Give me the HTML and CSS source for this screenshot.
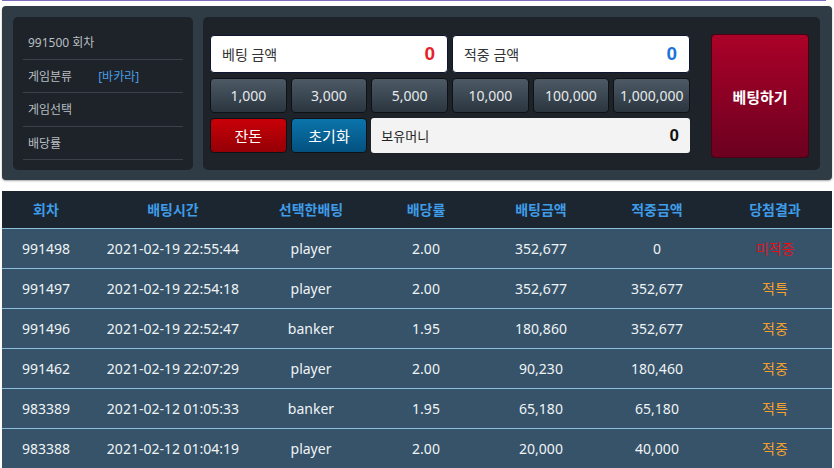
FILE: index.html
```html
<!doctype html>
<html>
<head>
<meta charset="utf-8">
<title>배팅</title>
<link rel="stylesheet" href="styles.css">
</head>
<body>
<div class="topline"></div>

<div class="panel">
	<ul class="info">
		<li>991500 회차</li>
		<li>게임분류 <span class="kind">[바카라]</span></li>
		<li>게임선택</li>
		<li>배당률</li>
	</ul>
	<div class="betbox">
		<div class="pad">
			<div class="field"><span>베팅 금액</span><b class="red">0</b></div>
			<div class="field"><span>적중 금액</span><b class="blue">0</b></div>
			<a class="chip">1,000</a>
			<a class="chip">3,000</a>
			<a class="chip">5,000</a>
			<a class="chip">10,000</a>
			<a class="chip">100,000</a>
			<a class="chip">1,000,000</a>
			<a class="chip change">잔돈</a>
			<a class="chip reset">초기화</a>
			<div class="money"><span>보유머니</span><b>0</b></div>
		</div>
		<a class="betbtn">베팅하기</a>
	</div>
</div>

<table class="list">
	<thead>
		<tr><th class="c1">회차</th><th class="c2">배팅시간</th><th class="c3">선택한배팅</th><th class="c4">배당률</th><th class="c5">배팅금액</th><th class="c6">적중금액</th><th class="c7">당첨결과</th></tr>
	</thead>
	<tbody>
		<tr><td>991498</td><td>2021-02-19 22:55:44</td><td>player</td><td>2.00</td><td>352,677</td><td>0</td><td class="lose">미적중</td></tr>
		<tr><td>991497</td><td>2021-02-19 22:54:18</td><td>player</td><td>2.00</td><td>352,677</td><td>352,677</td><td class="win">적특</td></tr>
		<tr><td>991496</td><td>2021-02-19 22:52:47</td><td>banker</td><td>1.95</td><td>180,860</td><td>352,677</td><td class="win">적중</td></tr>
		<tr><td>991462</td><td>2021-02-19 22:07:29</td><td>player</td><td>2.00</td><td>90,230</td><td>180,460</td><td class="win">적중</td></tr>
		<tr><td>983389</td><td>2021-02-12 01:05:33</td><td>banker</td><td>1.95</td><td>65,180</td><td>65,180</td><td class="win">적특</td></tr>
		<tr><td>983388</td><td>2021-02-12 01:04:19</td><td>player</td><td>2.00</td><td>20,000</td><td>40,000</td><td class="win">적중</td></tr>
	</tbody>
</table>
</body>
</html>
```
FILE: styles.css
```css
*{margin:0;padding:0;list-style:none;box-sizing:border-box;}
body{background:#fff;padding:0 2px;font-family:"Noto Sans","Noto Sans CJK KR",sans-serif;font-size:14px;color:#222;}
a{text-decoration:none;cursor:pointer;}

.topline{height:1px;margin-right:6px;background:#7e6cc2;}

.panel{display:flex;gap:10px;margin-top:5px;height:174px;padding:11px 12px 10px 11px;background:#2f3c46;border-radius:4px;box-shadow:0 1px 2px rgba(0,0,0,.35);}

.info{width:180px;padding:9px 10px 0;background:#1d2328;border-radius:5px;}
.info li{display:flex;align-items:center;gap:26px;height:33.5px;padding-left:5px;border-bottom:1px solid #3a4249;font-size:12px;color:#b9bec3;}
.info .kind{color:#4a9fe6;}

.betbox{flex:1;display:flex;align-items:flex-start;gap:21px;padding:17px 11px 0 7px;background:#1d2328;border-radius:5px;}
.pad{flex:1;display:grid;grid-template-columns:repeat(6,1fr);grid-template-rows:38px 35px 35px;column-gap:4px;row-gap:5px;padding-top:1px;}

.field{grid-column:span 3;display:flex;align-items:center;justify-content:space-between;padding:0 12px 0 11px;background:#fff;border-radius:4px;border:1px solid #0d1530;}
.field span{font-size:14px;color:#333;}
.field b{font-size:19px;font-family:"Liberation Sans",sans-serif;}
.field .red{color:#e5212b;}
.field .blue{color:#1d73d6;}

.chip{display:flex;align-items:center;justify-content:center;border:1px solid #0e1216;border-radius:4px;background:linear-gradient(#4d5a65,#2a353f);color:#e6e9ec;font-size:14px;}
.chip.change{background:linear-gradient(#c90008,#940006);color:#fff;font-size:15px;}
.chip.reset{background:linear-gradient(#0b74ab,#03517f);color:#fff;font-size:15px;}

.money{grid-column:span 4;display:flex;align-items:center;justify-content:space-between;padding:0 11px 0 10px;background:#f3f3f3;border-radius:3px;}
.money span{font-size:13px;color:#222;}
.money b{font-size:17px;font-family:"Liberation Sans",sans-serif;color:#111;}

.betbtn{width:98px;height:124px;display:flex;align-items:center;justify-content:center;background:linear-gradient(#ab0228,#6c0020);border:1px solid #4a0012;border-radius:4px;color:#fff;font-size:15px;font-weight:bold;}

.list{width:100%;margin-top:11px;border-collapse:collapse;table-layout:fixed;}
.list th{height:37px;background:#1b2631;color:#3f9ce8;font-size:14px;font-weight:bold;border-bottom:1px solid #8dc1de;}
.list td{height:40px;background:#36536a;color:#f0f3f5;text-align:center;font-size:14px;border-bottom:1px solid #8dc1de;}
.list .c1{width:88px;}
.list .c2{width:166px;}
.list .c3{width:110px;}
.list .c4{width:120px;}
.list .c5{width:110px;}
.list .c6{width:122px;}
.list .c7{width:114px;}
.list td.lose{color:#e2111b;}
.list td.win{color:#f3a02e;}
```
